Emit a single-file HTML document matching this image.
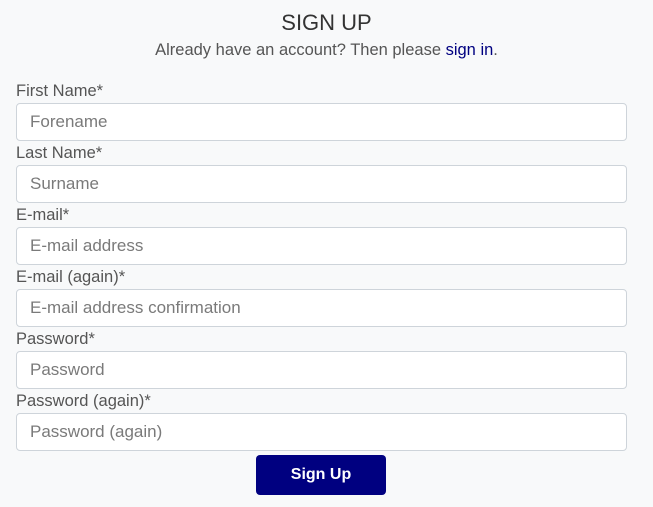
<!DOCTYPE html>
<html><head><style>
body{margin:0;background:#f8f9fa;font-family:"Liberation Sans",sans-serif;width:653px;height:507px;overflow:hidden;position:relative}
h1{position:absolute;top:10px;left:0;width:653px;text-align:center;margin:0;font-weight:300;font-size:22px;color:#333;letter-spacing:0}
.sub{position:absolute;top:41px;left:0;width:653px;text-align:center;font-size:16.5px;color:#555}
.sub a{color:#000080;text-decoration:none}
.g{position:absolute;left:16px;width:611px}
.g label{display:block;font-size:16.5px;color:#555;height:21px;line-height:18px}
.g .in{box-sizing:border-box;height:38px;border:1px solid #ced4da;border-radius:4px;background:#fff;padding-left:13px;line-height:36px;font-size:17px;color:#7a7a7a}
.btn{position:absolute;left:256px;top:455px;width:130px;height:40px;background:#000080;border-radius:4px;color:#fff;text-align:center;line-height:40px;font-size:16px;font-weight:bold}
</style></head><body>
<h1>SIGN UP</h1>
<div class="sub">Already have an account? Then please <a>sign in</a>.</div>
<div class="g" style="top:82px"><label>First Name*</label><div class="in">Forename</div></div>
<div class="g" style="top:144px"><label>Last Name*</label><div class="in">Surname</div></div>
<div class="g" style="top:206px"><label>E-mail*</label><div class="in">E-mail address</div></div>
<div class="g" style="top:268px"><label>E-mail (again)*</label><div class="in">E-mail address confirmation</div></div>
<div class="g" style="top:330px"><label>Password*</label><div class="in">Password</div></div>
<div class="g" style="top:392px"><label>Password (again)*</label><div class="in">Password (again)</div></div>
<div class="btn">Sign Up</div>
</body></html>
